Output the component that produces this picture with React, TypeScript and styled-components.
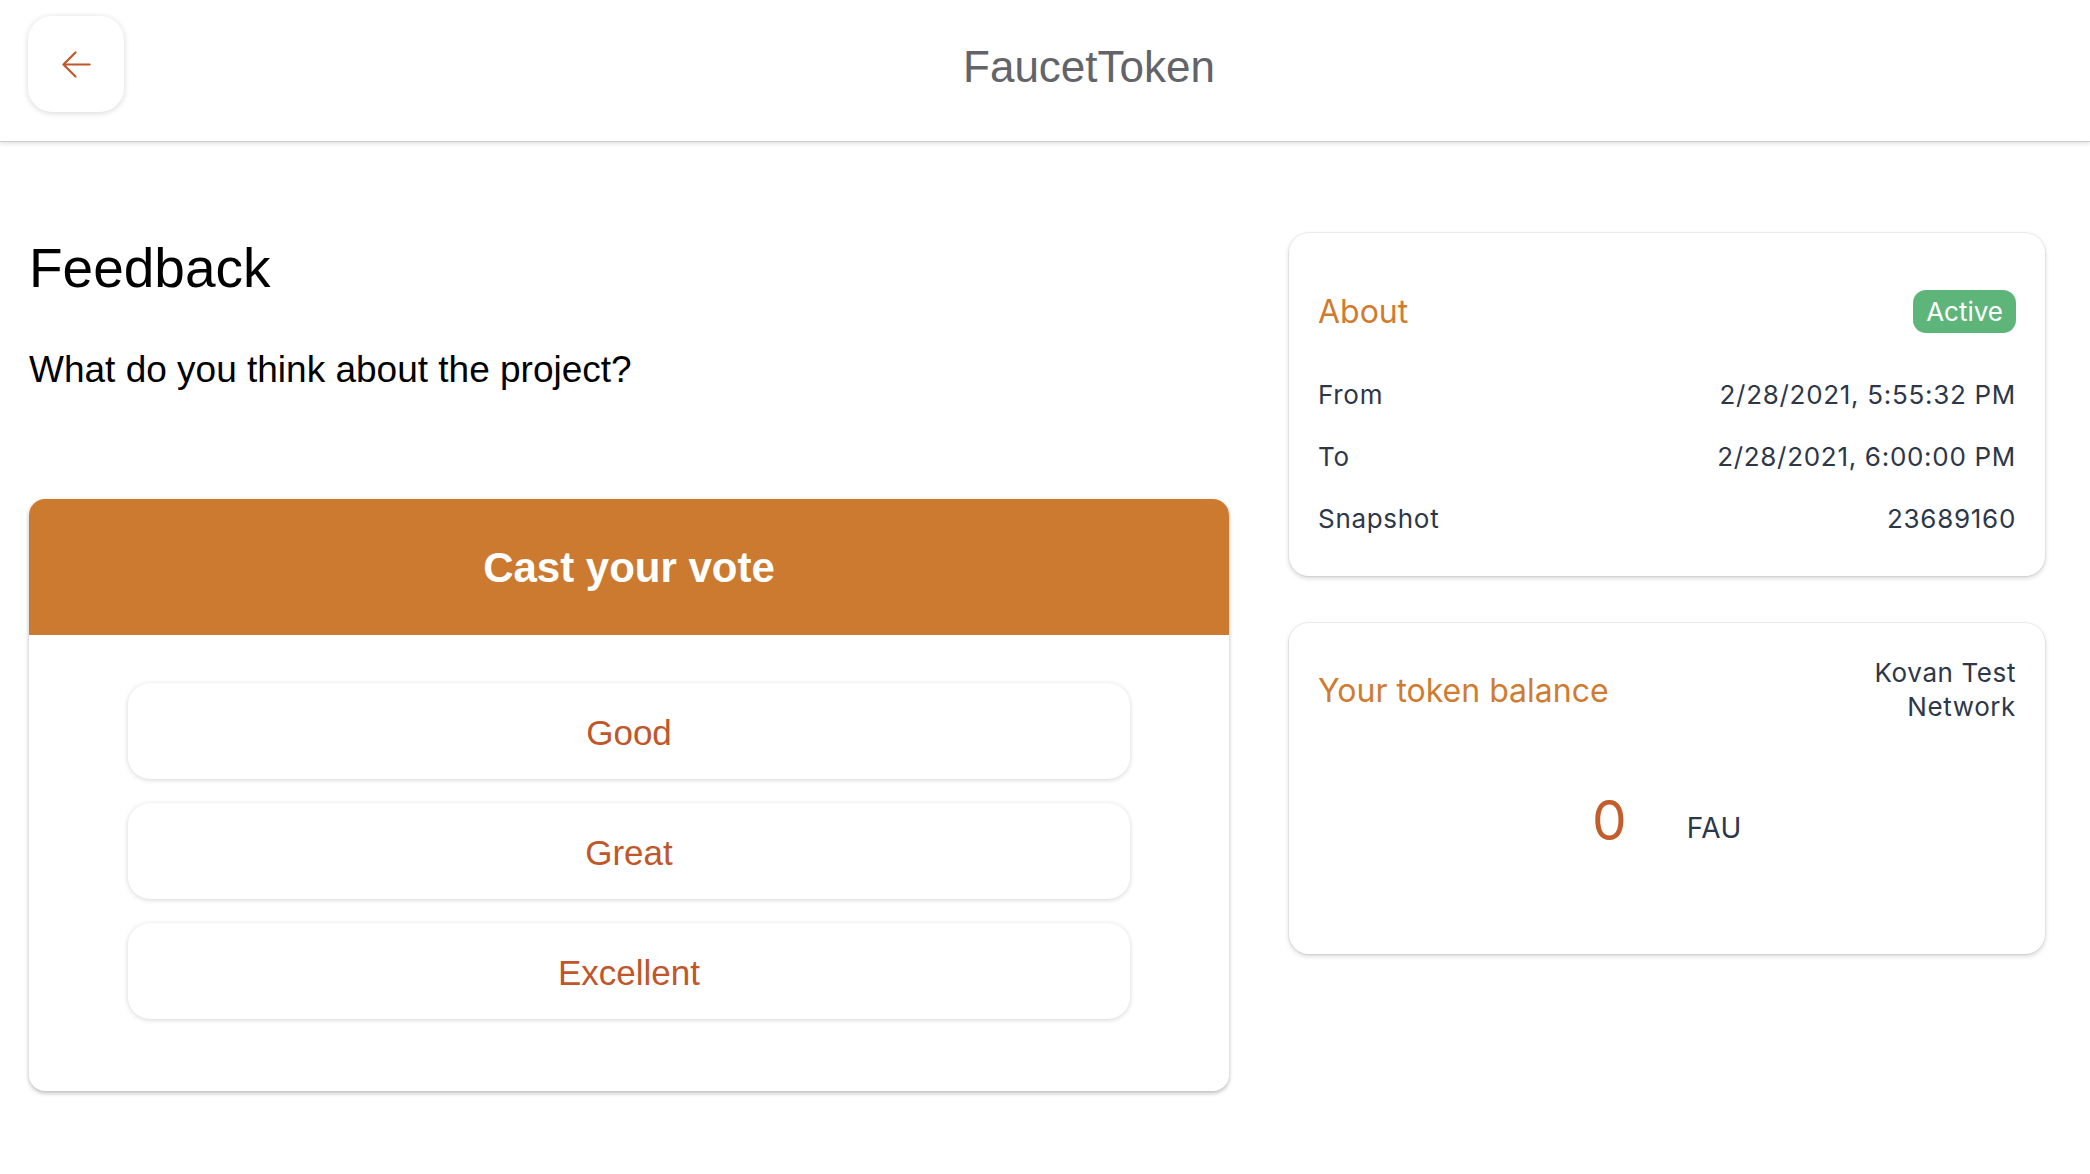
import React from "react";
import styled, { createGlobalStyle } from "styled-components";

const GlobalStyle = createGlobalStyle`
  html, body { margin: 0; padding: 0; background: #ffffff; }
  body { font-family: Inter, "Liberation Sans", sans-serif; color: #2d3748; }
  * { box-sizing: border-box; }
`;

const Page = styled.div`
  min-height: 1174px;
  background: #ffffff;
`;

const Header = styled.header`
  position: relative;
  z-index: 2;
  height: 141px;
  display: flex;
  align-items: flex-start;
  padding: 16px 28px 0 28px;
  background: #ffffff;
  box-shadow: 0 1px 0 #cfcfcf, 0 2px 5px rgba(0, 0, 0, 0.16);
`;

const BackButton = styled.button`
  width: 96px;
  height: 96px;
  flex: none;
  border: none;
  border-radius: 24px;
  background: #ffffff;
  box-shadow: 0 1px 6px rgba(0, 0, 0, 0.16);
  display: flex;
  align-items: center;
  justify-content: center;
  padding: 0;
  cursor: pointer;
`;

const Title = styled.h1`
  flex: 1;
  margin: 0;
  padding: 3px 8px 0 0;
  text-align: center;
  font-family: "Liberation Sans", Arial, sans-serif;
  font-weight: 400;
  font-size: 44px;
  line-height: 96px;
  color: #636469;
`;

const Main = styled.main`
  display: flex;
  align-items: flex-start;
  gap: 60px;
  padding: 92px 45px 40px 29px;
`;

const LeftColumn = styled.section`
  flex: 1;
  min-width: 0;
`;

const Heading = styled.h2`
  margin: 2px 0 0 0;
  font-family: "Liberation Sans", Arial, sans-serif;
  font-weight: 400;
  font-size: 55px;
  line-height: 66px;
  color: #000000;
`;

const Question = styled.p`
  margin: 47px 0 0 0;
  font-family: "Liberation Sans", Arial, sans-serif;
  font-size: 37px;
  line-height: 44px;
  color: #000000;
`;

const VoteCard = styled.div`
  margin-top: 107px;
  border-radius: 16px;
  overflow: hidden;
  background: #ffffff;
  box-shadow: 0 2px 4px rgba(0, 0, 0, 0.28);
`;

const VoteHeader = styled.div`
  height: 136px;
  padding-top: 2px;
  background: #cc7a2f;
  color: #ffffff;
  text-align: center;
  font-family: "Liberation Sans", Arial, sans-serif;
  font-weight: 700;
  font-size: 42px;
  line-height: 134px;
`;

const VoteBody = styled.div`
  display: flex;
  flex-direction: column;
  gap: 24px;
  padding: 48px 99px 72px 99px;
`;

const OptionButton = styled.button`
  height: 96px;
  padding: 4px 0 0 0;
  border: none;
  border-radius: 22px;
  background: #ffffff;
  box-shadow: 0 1px 5px rgba(0, 0, 0, 0.17);
  color: #c0572a;
  font-family: "Liberation Sans", Arial, sans-serif;
  font-size: 35px;
  cursor: pointer;
`;

const RightColumn = styled.aside`
  width: 756px;
  flex: none;
  display: flex;
  flex-direction: column;
  gap: 47px;
`;

const InfoCard = styled.div<{ $pt: number; $pb: number }>`
  border-radius: 20px;
  background: #ffffff;
  box-shadow: 0 0 0 1px rgba(0, 0, 0, 0.05), 0 2px 5px rgba(0, 0, 0, 0.18);
  padding: ${(p) => p.$pt}px 29px ${(p) => p.$pb}px 29px;
`;

const CardTop = styled.div<{ $gap: number }>`
  display: flex;
  align-items: center;
  justify-content: space-between;
  margin-bottom: ${(p) => p.$gap}px;
`;

const CardTitle = styled.h3`
  margin: 0;
  font-family: Inter, sans-serif;
  font-weight: 400;
  font-size: 32px;
  line-height: 43px;
  color: #d07c30;
`;

const Badge = styled.span`
  height: 43px;
  padding: 0 13px;
  border-radius: 13px;
  background: #5db57a;
  color: #ffffff;
  font-family: Inter, sans-serif;
  font-size: 26px;
  line-height: 43px;
`;

const InfoRow = styled.div`
  display: flex;
  justify-content: space-between;
  align-items: center;
  height: 62px;
  font-family: Inter, sans-serif;
  font-size: 26px;
  letter-spacing: 0.7px;
  line-height: 62px;
  color: #2d3748;
`;

const Network = styled.div`
  width: 160px;
  text-align: right;
  font-family: Inter, sans-serif;
  font-size: 26px;
  letter-spacing: 0.6px;
  line-height: 34px;
  color: #2d3748;
`;

const Balance = styled.div`
  display: flex;
  justify-content: center;
  align-items: flex-end;
  gap: 60px;
  font-family: Inter, sans-serif;
`;

const Amount = styled.span`
  font-size: 55px;
  line-height: 1.21;
  color: #c35e2c;
`;

const Unit = styled.span`
  font-size: 28px;
  line-height: 1;
  padding-bottom: 12px;
  letter-spacing: 0.5px;
  color: #2d3748;
`;

const ArrowBack = () => (
  <svg width="43" height="43" viewBox="0 0 512 512" fill="none">
    <path
      d="M244 400L100 256l144-144M120 256h292"
      stroke="#c0572a"
      strokeWidth="26"
      strokeLinecap="round"
      strokeLinejoin="round"
    />
  </svg>
);

const rows = [
  { label: "From", value: "2/28/2021, 5:55:32 PM" },
  { label: "To", value: "2/28/2021, 6:00:00 PM" },
  { label: "Snapshot", value: "23689160" },
];

const options = ["Good", "Great", "Excellent"];

export default function App() {
  return (
    <Page>
      <GlobalStyle />
      <Header>
        <BackButton aria-label="Back">
          <ArrowBack />
        </BackButton>
        <Title>FaucetToken</Title>
      </Header>
      <Main>
        <LeftColumn>
          <Heading>Feedback</Heading>
          <Question>What do you think about the project?</Question>
          <VoteCard>
            <VoteHeader>Cast your vote</VoteHeader>
            <VoteBody>
              {options.map((o) => (
                <OptionButton key={o}>{o}</OptionButton>
              ))}
            </VoteBody>
          </VoteCard>
        </LeftColumn>
        <RightColumn>
          <InfoCard $pt={57} $pb={26}>
            <CardTop $gap={31}>
              <CardTitle>About</CardTitle>
              <Badge>Active</Badge>
            </CardTop>
            {rows.map((r) => (
              <InfoRow key={r.label}>
                <span>{r.label}</span>
                <span>{r.value}</span>
              </InfoRow>
            ))}
          </InfoCard>
          <InfoCard $pt={33} $pb={100}>
            <CardTop $gap={63}>
              <CardTitle>Your token balance</CardTitle>
              <Network>Kovan Test Network</Network>
            </CardTop>
            <Balance>
              <Amount>0</Amount>
              <Unit>FAU</Unit>
            </Balance>
          </InfoCard>
        </RightColumn>
      </Main>
    </Page>
  );
}
